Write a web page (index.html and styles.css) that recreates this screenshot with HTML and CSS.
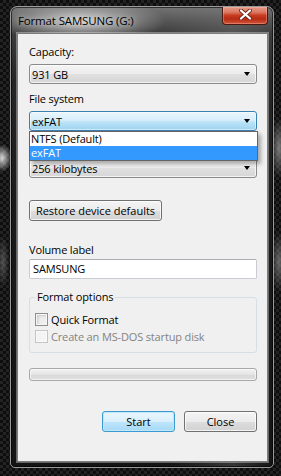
FILE: index.html
```html
<!DOCTYPE html>
<html lang="en">

<head>
    <meta charset="UTF-8">
    <title>Format SAMSUNG (G:)</title>
    <link rel="stylesheet" href="styles.css">
</head>

<body>
    <div class="window">
        <div class="titlebar">
            <span class="title">Format SAMSUNG (G:)</span>
            <button class="close-btn" title="Close">
                <svg width="13" height="11" viewBox="0 0 13 11">
                    <path d="M2 1.5 L11 9.5 M11 1.5 L2 9.5" stroke="#6b2417" stroke-width="4" stroke-linecap="round" />
                    <path d="M2 1.5 L11 9.5 M11 1.5 L2 9.5" stroke="#fff" stroke-width="2.3" stroke-linecap="round" />
                </svg>
            </button>
        </div>
        <div class="client">
            <div class="label">Capacity:</div>
            <div class="combo"><span>931 GB</span><i class="arrow"></i></div>

            <div class="label">File system</div>
            <div class="combo-wrap">
                <div class="combo focus"><span>exFAT</span><i class="arrow"></i></div>
                <ul class="dropdown">
                    <li>NTFS (Default)</li>
                    <li class="selected">exFAT</li>
                </ul>
            </div>

            <!-- “Allocation unit size” 标签被下拉列表挡住 -->
            <div class="label label-hidden"></div>
            <div class="combo combo-alloc"><span>256 kilobytes</span><i class="arrow"></i></div>

            <button class="btn restore">Restore device defaults</button>

            <div class="label label-volume">Volume label</div>
            <div class="textbox">SAMSUNG</div>

            <fieldset class="options">
                <legend>Format options</legend>
                <label class="check"><span class="box"></span>Quick Format</label>
                <label class="check disabled"><span class="box"></span>Create an MS-DOS startup disk</label>
            </fieldset>

            <div class="progress"></div>

            <div class="actions">
                <button class="btn default">Start</button>
                <button class="btn">Close</button>
            </div>
        </div>
    </div>
</body>

</html>
```

FILE: styles.css
```css
* {
    box-sizing: border-box;
    margin: 0;
    padding: 0;
    list-style: none;
}

body {
    width: 281px;
    height: 476px;
    overflow: hidden;
    font-family: "Open Sans", "Noto Sans", sans-serif;
    font-size: 11px;
    letter-spacing: -0.15px;
    color: #000;
    background:
        radial-gradient(10px 14px at 2px 158px, rgba(235, 235, 235, .9), rgba(235, 235, 235, 0) 100%),
        radial-gradient(8px 30px at 279px 148px, rgba(150, 150, 150, .8), rgba(150, 150, 150, 0) 100%),
        radial-gradient(8px 30px at 279px 262px, rgba(140, 140, 140, .7), rgba(140, 140, 140, 0) 100%),
        radial-gradient(6px 26px at 3px 262px, rgba(120, 120, 120, .6), rgba(120, 120, 120, 0) 100%),
        repeating-conic-gradient(#232323 0 25%, #0e0e0e 0 50%) 0 0 / 6px 6px;
}

/* 窗口外框 */
.window {
    display: flex;
    flex-direction: column;
    margin: 6px 0 0 10px;
    width: 264px;
    height: 462px;
    padding: 0 5px 5px 6px;
    border: 1px solid #9a9a9a;
    border-radius: 7px 7px 5px 5px;
    box-shadow: inset 0 0 0 1px rgba(0, 0, 0, .6);
    background:
        radial-gradient(85px 22px at 70px 14px, rgba(235, 235, 235, .8), rgba(210, 210, 210, .4) 55%, rgba(200, 200, 200, 0) 100%),
        linear-gradient(to right, rgba(0, 0, 0, 0) 60%, rgba(120, 120, 120, .35) 85%, rgba(0, 0, 0, 0) 100%),
        linear-gradient(to bottom, #747474 0, #555 14px, #3c3c3c 27px, #262626 70px, #1a1a1a 200px, #131313 100%);
}

.titlebar {
    display: flex;
    justify-content: space-between;
    align-items: flex-start;
    height: 26px;
}

.title {
    padding: 6px 0 0 1px;
    font-size: 11.5px;
    line-height: 16px;
    color: #000;
    text-shadow: 0 0 6px rgba(255, 255, 255, .9);
}

.close-btn {
    display: flex;
    align-items: center;
    justify-content: center;
    width: 46px;
    height: 18px;
    padding-bottom: 2px;
    border: 1px solid #4a1a10;
    border-top: none;
    border-radius: 0 0 4px 4px;
    box-shadow: inset 0 0 0 1px rgba(255, 200, 190, .35);
    background: linear-gradient(to bottom, #e59a89 0, #dc7a64 30%, #c73b20 50%, #b62b15 70%, #d4553a 100%);
}

/* 客户区 */
.client {
    flex: 1;
    display: flex;
    flex-direction: column;
    align-items: flex-start;
    padding: 10px 10px 0 11px;
    border: 1px solid #7c7c7c;
    box-shadow: 0 0 0 1px rgba(255, 255, 255, .35);
    background-color: #f0f0f0;
}

.label {
    height: 16px;
    line-height: 16px;
}

.combo + .label {
    margin-top: 7px;
}

.combo-wrap + .label {
    margin-top: 8px;
}

.combo {
    display: flex;
    align-items: center;
    justify-content: space-between;
    width: 228px;
    height: 20px;
    margin-top: 4px;
    padding: 0 6px 0 2px;
    border: 1px solid #8a8a8a;
    border-radius: 3px;
    box-shadow: inset 0 0 0 1px rgba(255, 255, 255, .7);
    background: linear-gradient(to bottom, #f4f4f4 0, #ececec 50%, #e0e0e0 51%, #d6d6d6 100%);
}

.combo.focus {
    border-color: #3c7fb1;
    box-shadow: inset 0 0 0 1px rgba(255, 255, 255, .5);
    background: linear-gradient(to bottom, #eaf6fd 0, #d7eefb 45%, #bde4f8 55%, #9dd3f1 100%);
}

.combo-alloc {
    margin-top: 3px;
}

.arrow {
    width: 0;
    height: 0;
    border-top: 4px solid #000;
    border-left: 3.5px solid transparent;
    border-right: 3.5px solid transparent;
}

.combo-wrap {
    position: relative;
    z-index: 2;
}

.dropdown {
    position: absolute;
    top: 100%;
    left: 0;
    width: 229px;
    border: 1px solid #646464;
    background-color: #fff;
    box-shadow: 3px 3px 4px rgba(0, 0, 0, .3);
}

.dropdown li {
    height: 14px;
    line-height: 14px;
    padding-left: 1px;
}

.dropdown li.selected {
    background-color: #3399ff;
    color: #fff;
}

/* 按钮 */
.btn {
    height: 21px;
    border: 1px solid #707070;
    border-radius: 3px;
    font: inherit;
    color: #000;
    box-shadow: inset 0 0 0 1px rgba(255, 255, 255, .75);
    background: linear-gradient(to bottom, #f4f4f4 0, #ebebeb 50%, #dddddd 51%, #d2d2d2 100%);
}

.restore {
    width: 133px;
    margin-top: 22px;
}

.label-volume {
    margin-top: 21px;
}

.textbox {
    width: 228px;
    height: 20px;
    margin-top: 1px;
    padding-left: 3px;
    line-height: 18px;
    border: 1px solid #c9ccd2;
    border-top-color: #abadb3;
    border-radius: 2px;
    background-color: #fff;
}

/* 分组框 */
.options {
    width: 228px;
    margin-top: 10px;
    padding: 6px 5px 8px 5px;
    border: 1px solid #d5dfe5;
    border-radius: 3px;
}

.options legend {
    padding: 0 2px;
    line-height: 16px;
}

.check {
    display: flex;
    align-items: center;
    gap: 3px;
    height: 16px;
}

.check + .check {
    margin-top: 1px;
}

.box {
    width: 13px;
    height: 13px;
    border: 1px solid #8e8f8f;
    box-shadow: inset 0 0 0 1px #f6f6f6, inset 2px 2px 3px #c6c9ce;
    background-color: #eeeeee;
}

.check.disabled {
    color: #838383;
}

.check.disabled .box {
    border-color: #c4c4c4;
    box-shadow: inset 0 0 0 1px #fafafa;
    background-color: #f4f4f4;
}

.progress {
    width: 228px;
    height: 13px;
    margin-top: 15px;
    border: 1px solid #a8a8a8;
    border-radius: 3px;
    box-shadow: inset 0 0 0 1px rgba(255, 255, 255, .6);
    background: linear-gradient(to bottom, #f2f2f2 0, #e4e4e4 50%, #d8d8d8 51%, #dfdfdf 100%);
}

.actions {
    display: flex;
    gap: 9px;
    margin-top: 30px;
    padding-left: 73px;
}

.actions .btn {
    width: 73px;
}

.actions .default {
    border-color: #3c9ad0;
    box-shadow: inset 0 0 0 1px #bfe9fb;
    background: linear-gradient(to bottom, #eaf6fd 0, #d9f0fc 50%, #bee6fd 51%, #a7d9f5 100%);
}
```
